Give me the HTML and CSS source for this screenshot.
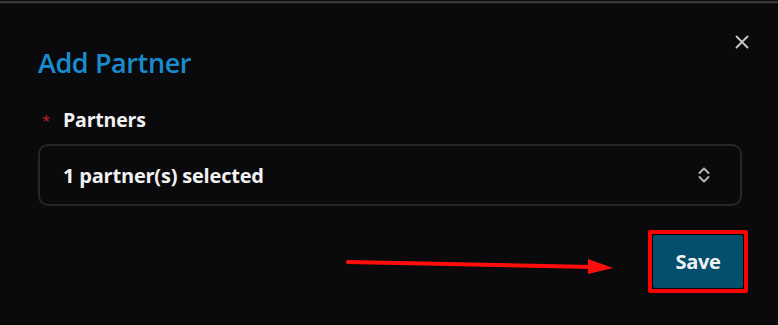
FILE: index.html
```html
<!DOCTYPE html>
<html>
<head>
<meta charset="utf-8">
<link rel="stylesheet" href="styles.css">
</head>
<body>
<div class="topline"></div>
<div class="modal">
  <div class="header">
    <h2 class="title">Add Partner</h2>
    <button class="close" aria-label="Close">
      <svg width="14" height="14" viewBox="0 0 14 14"><path d="M1.5 1.5 L12.5 12.5 M12.5 1.5 L1.5 12.5" stroke="#c9c9cc" stroke-width="1.8" stroke-linecap="round"/></svg>
    </button>
  </div>
  <div class="field">
    <label class="label"><span class="req">*</span>Partners</label>
    <div class="select">
      <span class="value">1 partner(s) selected</span>
      <svg class="chev" width="14" height="20" viewBox="0 0 14 20"><path d="M2.5 8 L7 3.5 L11.5 8 M2.5 12 L7 16.5 L11.5 12" fill="none" stroke="#b5b5b8" stroke-width="2" stroke-linecap="round" stroke-linejoin="round"/></svg>
    </div>
  </div>
  <div class="footer">
    <div class="highlight"><button class="save">Save</button></div>
  </div>
</div>
<svg class="arrow" width="280" height="20" viewBox="0 0 280 20"><path d="M3 4 L248 9" stroke="#ff0d0d" stroke-width="4" stroke-linecap="round"/><path d="M243 1 L268 10 L243 16 Z" fill="#ff0d0d"/></svg>
</body>
</html>
```
FILE: styles.css
```css
html, body {
  margin: 0;
  padding: 0;
  background: #0a0a0c;
  height: 325px;
  overflow: hidden;
  font-family: "Open Sans", "Noto Sans", sans-serif;
}
.topline {
  height: 2px;
  margin-top: 1px;
  background: #38383b;
  border-bottom: 1px solid #1a1a1d;
}
.modal {
  padding: 0 36px 0 38px;
  display: flex;
  flex-direction: column;
}
.header {
  display: flex;
  justify-content: space-between;
  align-items: flex-start;
}
.title {
  margin: 41px 0 0 0;
  font-size: 27px;
  font-weight: 600;
  color: #1a8ccc;
  line-height: 36px;
  letter-spacing: -0.4px;
}
.close {
  margin-top: 31px;
  margin-right: -7px;
  background: none;
  border: none;
  padding: 0;
  width: 14px;
  height: 14px;
  display: flex;
}
.field {
  margin-top: 26px;
  display: flex;
  flex-direction: column;
}
.label {
  font-size: 19.5px;
  font-weight: 700;
  color: #f2f2f2;
  line-height: 26px;
  display: flex;
  align-items: center;
  letter-spacing: -0.2px;
}
.req {
  color: #c0262c;
  font-size: 15px;
  font-weight: 400;
  margin: 0 13px 0 4px;
}
.select {
  margin-top: 11px;
  height: 58px;
  border: 2px solid #262629;
  border-radius: 10px;
  display: flex;
  align-items: center;
  justify-content: space-between;
  padding: 0 29px 0 23px;
}
.value {
  font-size: 20px;
  font-weight: 700;
  color: #f2f2f2;
  letter-spacing: -0.2px;
}
.chev {
  display: block;
}
.footer {
  display: flex;
  justify-content: flex-end;
  margin-top: 24px;
  margin-right: -6px;
}
.highlight {
  border: 4px solid #ff0000;
  border-radius: 2px;
  padding: 1px;
}
.save {
  width: 90px;
  height: 53px;
  background: #02506d;
  border: none;
  border-radius: 2px;
  color: #f0f0f0;
  font-family: "Open Sans", "Noto Sans", sans-serif;
  font-size: 20px;
  font-weight: 700;
  letter-spacing: -0.3px;
}
.arrow {
  position: absolute;
  left: 345px;
  top: 258px;
}
```
